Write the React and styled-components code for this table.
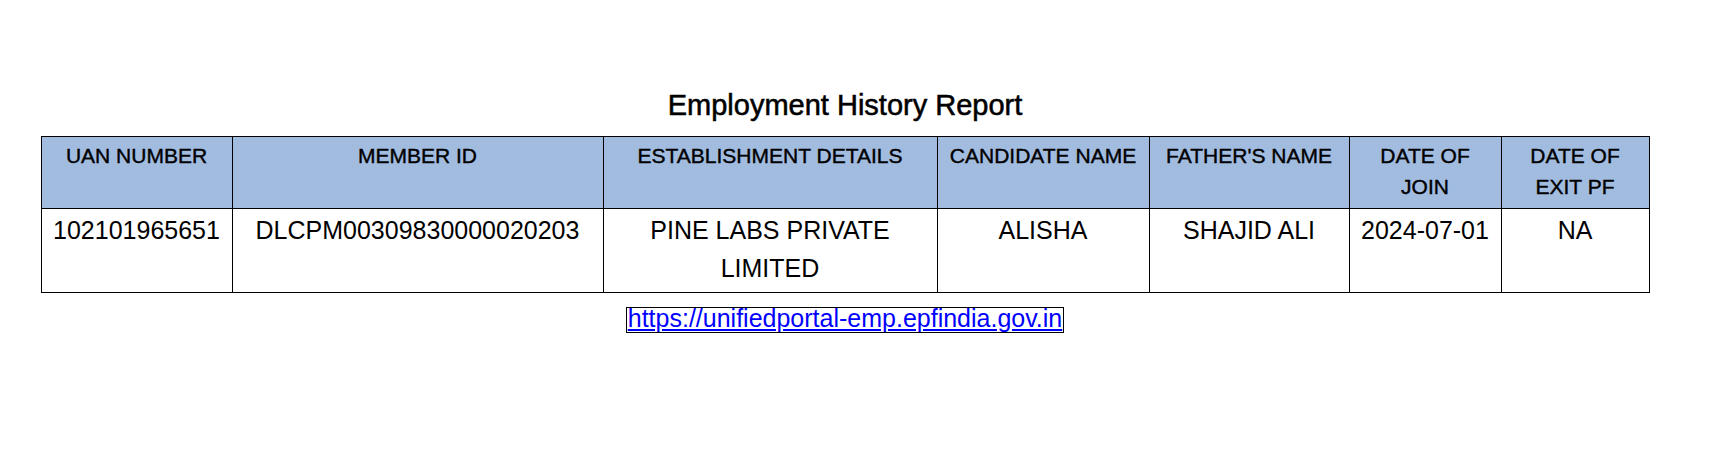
import React from "react";
import styled, { createGlobalStyle } from "styled-components";

const GlobalStyle = createGlobalStyle`
  html, body {
    margin: 0;
    padding: 0;
    background: #ffffff;
  }
  body {
    font-family: "Liberation Sans", Arial, sans-serif;
    color: #000000;
  }
`;

const Page = styled.div`
  padding: 88px 0 40px 41px;
`;

const Report = styled.div`
  width: 1608px;
  display: flex;
  flex-direction: column;
  align-items: center;
`;

const Title = styled.h1`
  margin: 0;
  font-size: 29px;
  line-height: 34px;
  font-weight: normal;
  color: #000;
  -webkit-text-stroke: 0.55px #000;
`;

const Table = styled.table`
  margin-top: 14px;
  width: 1608px;
  border-collapse: collapse;
  table-layout: fixed;
`;

const Col = styled.col`
  width: ${(p) => p.$w}px;
`;

const HeadCell = styled.th`
  border: 1px solid #000;
  background: #a2bce0;
  font-size: 21px;
  line-height: 31px;
  font-weight: normal;
  -webkit-text-stroke: 0.4px #000;
  padding: 3px 4px 6px;
  vertical-align: top;
  text-align: center;
  color: #000;
`;

const Cell = styled.td`
  border: 1px solid #000;
  font-size: 25px;
  line-height: 38px;
  padding: 2px 4px 5px;
  vertical-align: top;
  text-align: center;
  color: #000;
`;

const PortalLink = styled.a`
  margin-top: 14px;
  border: 1px solid #000;
  color: #0000ff;
  font-size: 25px;
  line-height: 20px;
  padding: 0 1px 4px;
  text-decoration: underline;
`;

const columns = [
  { w: 191, label: "UAN NUMBER" },
  { w: 371, label: "MEMBER ID" },
  { w: 334, label: "ESTABLISHMENT DETAILS" },
  { w: 212, label: "CANDIDATE NAME" },
  { w: 200, label: "FATHER'S NAME" },
  { w: 152, label: "DATE OF JOIN" },
  { w: 148, label: "DATE OF EXIT PF" },
];

const rows = [
  [
    "102101965651",
    "DLCPM00309830000020203",
    "PINE LABS PRIVATE LIMITED",
    "ALISHA",
    "SHAJID ALI",
    "2024-07-01",
    "NA",
  ],
];

export default function App() {
  return (
    <>
      <GlobalStyle />
      <Page>
        <Report>
          <Title>Employment History Report</Title>
          <Table>
            <colgroup>
              {columns.map((c) => (
                <Col key={c.label} $w={c.w} />
              ))}
            </colgroup>
            <thead>
              <tr>
                {columns.map((c) => (
                  <HeadCell key={c.label}>{c.label}</HeadCell>
                ))}
              </tr>
            </thead>
            <tbody>
              {rows.map((r, i) => (
                <tr key={i}>
                  {r.map((v, j) => (
                    <Cell key={j}>{v}</Cell>
                  ))}
                </tr>
              ))}
            </tbody>
          </Table>
          <PortalLink href="https://unifiedportal-emp.epfindia.gov.in">
            https://unifiedportal-emp.epfindia.gov.in
          </PortalLink>
        </Report>
      </Page>
    </>
  );
}
